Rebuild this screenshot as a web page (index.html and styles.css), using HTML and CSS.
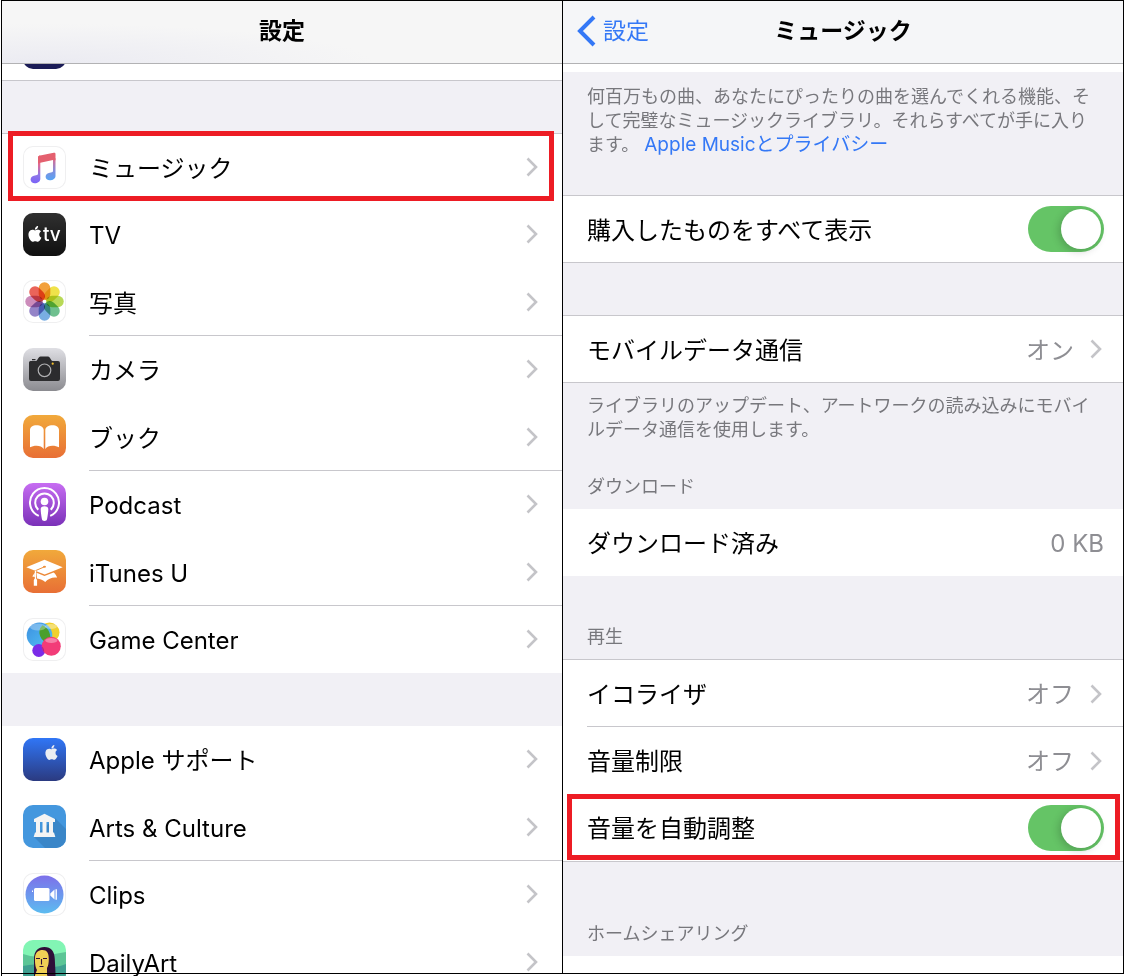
FILE: index.html
```html
<!DOCTYPE html>
<html lang="ja">
  <head>
    <meta charset="UTF-8" />
    <meta name="viewport" content="width=device-width, initial-scale=1.0" />
    <title>設定 - ミュージック</title>
    <link rel="stylesheet" href="styles.css">
  </head>
  <body>
    <svg class="defs" width="0" height="0" aria-hidden="true">
      <defs>
        <linearGradient id="g-music" x1="0" y1="0" x2="0" y2="1">
          <stop offset="0" stop-color="#f2565f" />
          <stop offset=".35" stop-color="#dc6b98" />
          <stop offset=".7" stop-color="#8f78e8" />
          <stop offset="1" stop-color="#7a62f8" />
        </linearGradient>
        <linearGradient id="g-music2" x1="0" y1="0" x2="0" y2="1">
          <stop offset="0" stop-color="#e2688a" />
          <stop offset=".6" stop-color="#7f90e0" />
          <stop offset="1" stop-color="#56a5f4" />
        </linearGradient>
        <linearGradient id="g-blue" x1="0" y1="0" x2="1" y2="1">
          <stop offset="0" stop-color="#3c8fe0" />
          <stop offset="1" stop-color="#53c3f5" />
        </linearGradient>
        <linearGradient id="g-clips" x1="0" y1="0" x2="0" y2="1">
          <stop offset="0" stop-color="#7d70ea" />
          <stop offset="1" stop-color="#5cbcf0" />
        </linearGradient>
        <path id="apple" d="M12.152 6.896c-.948 0-2.415-1.078-3.96-1.04-2.04.027-3.91 1.183-4.961 3.014-2.117 3.675-.546 9.103 1.519 12.09 1.013 1.454 2.208 3.09 3.792 3.039 1.52-.065 2.09-.987 3.935-.987 1.831 0 2.35.987 3.96.948 1.637-.026 2.676-1.48 3.676-2.948 1.156-1.688 1.636-3.325 1.662-3.415-.039-.013-3.182-1.221-3.22-4.857-.026-3.04 2.48-4.494 2.597-4.559-1.429-2.09-3.623-2.324-4.39-2.376-2-.156-3.675 1.09-4.61 1.09zM15.53 3.83c.843-1.012 1.4-2.427 1.245-3.83-1.207.052-2.662.805-3.532 1.818-.78.896-1.454 2.338-1.273 3.714 1.338.104 2.715-.688 3.559-1.701" />
        <rect id="petal" x="-5.8" y="-19.2" width="11.6" height="17.6" rx="5.8" />
        <symbol id="chevron" viewBox="0 0 12 20">
          <path d="M1.5 1.5 10 10 1.5 18.5" fill="none" stroke="#c4c4c8" stroke-width="2.6" />
        </symbol>
      </defs>
    </svg>

    <div class="screens">
      <main class="phone">
        <header class="navbar navbar-tint">
          <h1>設定</h1>
        </header>

        <div class="peek"><span class="icon icon-navy"></span></div>
        <div class="gap gap-lined"></div>

        <ul class="list list-lined">
          <li class="row marked">
            <a href="#">
              <svg class="icon icon-white" viewBox="0 0 43 43">
                <path fill="url(#g-music)" d="M15 11.8c0-1.4.6-2 2-2.300L17.300 9.500V33c0 2.400-2.600 4.300-5.500 4.300-2.400 0-4.200-1.500-4.200-3.700 0-2.700 2.300-4 5.400-4.300 1.500-.2 2-.5 2-1.800z" />
                <path fill="url(#g-music2)" d="M30 14v10.700c0 1.200-.6 1.600-2.100 1.800-3 .3-5.300 1.600-5.300 4.200 0 2.200 1.800 3.600 4.200 3.600 3 0 5.700-2 5.700-4.400V12z" />
                <path fill="#e4606f" d="M15 12c0-1.500.7-2.200 2.200-2.500l13.500-2.700c1.200-.2 1.800.2 1.800 1.400v6L30 14l-12.700 2.800L15 17.500z" />
              </svg>
              <span class="label">ミュージック</span>
              <svg class="chevron"><use href="#chevron" /></svg>
            </a>
          </li>
          <li class="row">
            <a href="#">
              <svg class="icon icon-tv" viewBox="0 0 43 43">
                <use href="#apple" fill="#fff" transform="translate(4 13) scale(.66)" />
                <text x="20" y="28" class="tv-text">tv</text>
              </svg>
              <span class="label">TV</span>
              <svg class="chevron"><use href="#chevron" /></svg>
            </a>
          </li>
          <li class="row ruled">
            <a href="#">
              <svg class="icon icon-white" viewBox="0 0 43 43">
                <g class="petals" transform="translate(21.500 21.500)">
                  <use href="#petal" fill="#f2a03c" />
                  <use href="#petal" fill="#f0e24a" transform="rotate(45)" />
                  <use href="#petal" fill="#b8d957" transform="rotate(90)" />
                  <use href="#petal" fill="#6fc08f" transform="rotate(135)" />
                  <use href="#petal" fill="#79aee2" transform="rotate(180)" />
                  <use href="#petal" fill="#9484c8" transform="rotate(225)" />
                  <use href="#petal" fill="#cc8cbb" transform="rotate(270)" />
                  <use href="#petal" fill="#ea6459" transform="rotate(315)" />
                </g>
                <circle cx="21.500" cy="21.500" r="1.400" fill="#fff" />
              </svg>
              <span class="label">写真</span>
              <svg class="chevron"><use href="#chevron" /></svg>
            </a>
          </li>
          <li class="row">
            <a href="#">
              <svg class="icon icon-camera" viewBox="0 0 43 43">
                <path fill="#2c2c2e" d="M7.500 13H13c1.600 0 2.200-4.500 4.500-4.500h7.500c2.300 0 2.900 4.500 4.500 4.500h5.500a2 2 0 0 1 2 2v16a2 2 0 0 1-2 2H8a2 2 0 0 1-2-2V14.500A1.500 1.500 0 0 1 7.500 13zM9 11h3.500v1.200H9z" />
                <circle cx="21.500" cy="22.300" r="6.300" fill="none" stroke="#b0b0b2" stroke-width="1.200" />
                <circle cx="29.700" cy="15.700" r="1.100" fill="#f5c02c" />
              </svg>
              <span class="label">カメラ</span>
              <svg class="chevron"><use href="#chevron" /></svg>
            </a>
          </li>
          <li class="row ruled">
            <a href="#">
              <svg class="icon icon-orange" viewBox="0 0 43 43">
                <path fill="#fff" d="M7 15c0-2.800 2.700-4.800 6.500-4.800S20.700 12 20.700 15v19c-1.500-2.300-4-3.300-7-3.300-2.700 0-5 .5-6.700 1.600zM36 15c0-2.800-2.700-4.800-6.500-4.800S22.300 12 22.300 15v19c1.500-2.300 4-3.300 7-3.300 2.700 0 5 .5 6.700 1.600z" />
              </svg>
              <span class="label">ブック</span>
              <svg class="chevron"><use href="#chevron" /></svg>
            </a>
          </li>
          <li class="row">
            <a href="#">
              <svg class="icon icon-purple" viewBox="0 0 43 43">
                <g fill="none" stroke="#fff" stroke-width="2">
                  <path d="M15.800 32.900A14.500 14.500 0 1 1 27.200 32.900" />
                  <path d="M15.300 26.700A9.300 9.300 0 1 1 27.700 26.700" />
                </g>
                <circle cx="21.500" cy="18.500" r="3.800" fill="#fff" />
                <path fill="#fff" d="M17.700 26c0-2 1.500-2.800 3.800-2.800s3.800.8 3.800 2.800c0 3-.7 7-1.100 9.500-.3 1.800-1.200 2.500-2.700 2.500s-2.400-.7-2.700-2.500c-.4-2.500-1.100-6.500-1.100-9.500z" />
              </svg>
              <span class="label">Podcast</span>
              <svg class="chevron"><use href="#chevron" /></svg>
            </a>
          </li>
          <li class="row ruled">
            <a href="#">
              <svg class="icon icon-orange" viewBox="0 0 43 43">
                <path fill="#fff" d="M3.300 17.300 21.500 9.700l18.200 7.600-18 7.200z" />
                <path fill="none" stroke="#ee8f38" stroke-width="1" d="M21.500 16.800 10.500 21.500" />
                <ellipse cx="21.500" cy="16.800" rx="1.500" ry="1" fill="#ee8f38" />
                <path fill="#fff" d="M13.500 22.800l8 3.300 9-3.700c1.500 1 2.700 2.600 3.700 5.200-4.500-.8-8.700.8-12 4.400-2-1.800-4.600-3-8.200-3.500z" />
                <path fill="#fff" d="M11.800 20.500h1.300v8l1 1.500v5.700h-3.300V30l1-1.500z" />
                <path fill="#fff" d="M9.300 26.500l2.500-4v4.500z" />
              </svg>
              <span class="label">iTunes U</span>
              <svg class="chevron"><use href="#chevron" /></svg>
            </a>
          </li>
          <li class="row">
            <a href="#">
              <svg class="icon icon-white" viewBox="0 0 43 43">
                <circle cx="26.500" cy="14.500" r="10" fill="#f0d02e" />
                <circle cx="16.500" cy="17.300" r="12.800" fill="url(#g-blue)" />
                <path fill="#4a9f2c" d="M19.500 7.300A10 10 0 0 0 26 24.500 12.800 12.800 0 0 0 19.500 7.300z" />
                <circle cx="15.800" cy="32.500" r="6.500" fill="#7b2be8" />
                <circle cx="28.300" cy="28.300" r="9.500" fill="#f23c78" />
                <path fill="#a8238f" d="M19 28.400a9.500 9.500 0 0 0 2 6 6.500 6.500 0 0 0-2-6z" />
                <ellipse cx="15" cy="9" rx="8" ry="3.500" fill="#fff" opacity=".3" />
                <ellipse cx="28" cy="8.500" rx="6" ry="2.500" fill="#fff" opacity=".35" />
                <ellipse cx="28.300" cy="22.500" rx="6" ry="2.500" fill="#fff" opacity=".35" />
              </svg>
              <span class="label">Game Center</span>
              <svg class="chevron"><use href="#chevron" /></svg>
            </a>
          </li>
        </ul>

        <div class="gap"></div>

        <ul class="list">
          <li class="row">
            <a href="#">
              <svg class="icon icon-support" viewBox="0 0 43 43">
                <use href="#apple" fill="#eceef2" transform="translate(21 7) scale(.62)" />
              </svg>
              <span class="label">Apple サポート</span>
              <svg class="chevron"><use href="#chevron" /></svg>
            </a>
          </li>
          <li class="row ruled">
            <a href="#">
              <svg class="icon icon-arts" viewBox="0 0 43 43">
                <path fill="#3a86c8" d="M32 13 43 24v19H22L11 32z" />
                <path fill="#f4f4f4" d="M21.500 8.800 32 14v3H11v-3zM13 17h4v11h-4zM19.500 17h4v11h-4zM26 17h4v11h-4zM12 27.500h19l1.300 4.500H10.700z" />
              </svg>
              <span class="label">Arts &amp; Culture</span>
              <svg class="chevron"><use href="#chevron" /></svg>
            </a>
          </li>
          <li class="row">
            <a href="#">
              <svg class="icon icon-white" viewBox="0 0 43 43">
                <circle cx="21.500" cy="21.500" r="19" fill="url(#g-clips)" />
                <rect x="11" y="15" width="15.500" height="13" rx="1.500" fill="#fff" />
                <path fill="#fff" d="M27.300 20.500 31.500 16.500v10l-4.200-4zM32.500 16.300h1.400v10.400h-1.400zM9 17.500h1v1.500H9z" />
              </svg>
              <span class="label">Clips</span>
              <svg class="chevron"><use href="#chevron" /></svg>
            </a>
          </li>
          <li class="row ruled">
            <a href="#">
              <svg class="icon icon-daily" viewBox="0 0 43 43">
                <path fill="#5cc596" d="M0 14q11 4 21 2t22-4v31H0z" />
                <path fill="#3f9f90" d="M0 26q12-3 22 0t21-2v19H0z" />
                <path fill="#2e0f38" d="M11 43V19c0-8 4-12 10.500-12S31.500 11 31.800 19c.3 7 1 14 .7 24z" />
                <path fill="#efcf55" d="M12 17c.5-4.500 3.500-7 7.500-7 4.500 0 6.300 3 6.300 9 0 4-.5 7-1.800 9v7l5 8H12v-8l2-5C12.500 28 11.700 23 12 17z" />
                <path fill="none" stroke="#2e0f38" stroke-width="1.100" d="M13 18.500h4M20 18.500h4M18.500 19v5.500M16.500 26.500h4" />
              </svg>
              <span class="label">DailyArt</span>
              <svg class="chevron"><use href="#chevron" /></svg>
            </a>
          </li>
        </ul>
      </main>

      <section class="phone phone-right">
        <header class="navbar">
          <a class="back" href="#">
            <svg viewBox="0 0 20 32"><path d="M18 2 4 16l14 14" fill="none" stroke="#3478f6" stroke-width="4" /></svg>
            設定
          </a>
          <h2>ミュージック</h2>
        </header>

        <div class="sliver"></div>
        <div class="notes notes-top">
          <p>何百万もの曲、あなたにぴったりの曲を選んでくれる機能、そして完璧なミュージックライブラリ。それらすべてが手に入ります。 <a href="#">Apple Musicとプライバシー</a></p>
        </div>

        <div class="group group-lined">
          <div class="setting">
            <label for="show-all">購入したものをすべて表示</label>
            <input class="switch" id="show-all" type="checkbox" checked />
          </div>
        </div>

        <div class="gap"></div>

        <div class="group group-lined">
          <a class="setting" href="#">
            <span>モバイルデータ通信</span>
            <span class="value">オン</span>
            <svg class="chevron"><use href="#chevron" /></svg>
          </a>
        </div>
        <div class="notes">
          <p>ライブラリのアップデート、アートワークの読み込みにモバイルデータ通信を使用します。</p>
          <h3>ダウンロード</h3>
        </div>

        <div class="group">
          <div class="setting">
            <span>ダウンロード済み</span>
            <span class="value">0 KB</span>
          </div>
        </div>
        <div class="notes notes-play">
          <h3>再生</h3>
        </div>

        <div class="group group-lined">
          <a class="setting ruled" href="#">
            <span>イコライザ</span>
            <span class="value">オフ</span>
            <svg class="chevron"><use href="#chevron" /></svg>
          </a>
          <a class="setting" href="#">
            <span>音量制限</span>
            <span class="value">オフ</span>
            <svg class="chevron"><use href="#chevron" /></svg>
          </a>
          <div class="setting marked">
            <label for="sound-check">音量を自動調整</label>
            <input class="switch" id="sound-check" type="checkbox" checked />
          </div>
        </div>
        <div class="notes notes-home">
          <h3>ホームシェアリング</h3>
        </div>
      </section>
    </div>
  </body>
</html>
```

FILE: styles.css
```css
* {
  box-sizing: border-box;
}
body {
  margin: 0;
  font-family: Inter, "Noto Sans CJK JP", sans-serif;
  font-size: 24px;
  line-height: 32px;
  color: #000;
  background: #fff;
}
a {
  color: inherit;
  text-decoration: none;
}
h1,
h2,
h3,
p,
ul {
  margin: 0;
  padding: 0;
  list-style: none;
}
.defs {
  position: absolute;
}

.screens {
  display: flex;
  position: relative;
  height: 100vh;
  padding-left: 1px;
  overflow: hidden;
}
/* bottom edge of the frame, drawn over the cut-off row */
.screens::after {
  content: "";
  position: absolute;
  left: 1px;
  right: 0;
  bottom: 2px;
  height: 1px;
  background: #000;
}
.phone {
  box-sizing: content-box;
  flex: 1;
  min-width: 0;
  border-top: 1px solid #000;
  border-left: 1px solid #000;
}
.phone-right {
  border-right: 1px solid #000;
  margin-bottom: 2px;
}

/* nav bars */
.navbar {
  display: grid;
  grid-template-columns: 1fr auto 1fr;
  align-items: center;
  height: 63px;
  padding: 0 13px 2px;
  border-bottom: 1px solid #b2b2b4;
  background: #f5f6f8;
}
.navbar-tint {
  background: radial-gradient(ellipse at 8% 100%, #ebebf2, #f6f6f6 45%);
}
.navbar h1,
.navbar h2 {
  grid-column: 2;
  font-size: 23px;
  font-weight: 700;
}
.back {
  display: flex;
  align-items: center;
  gap: 7px;
  font-size: 23px;
  color: #3478f6;
}
.back svg {
  width: 20px;
  height: 32px;
}

/* left: app list */
.peek {
  display: flex;
  align-items: flex-end;
  height: 16px;
  padding: 0 21px 11px;
  overflow: hidden;
}
.icon-navy {
  background: #1b1c57;
}
.gap {
  height: 53px;
  background: #f1f0f5;
}
.gap-lined {
  border-top: 1px solid #c8c7cc;
}
.list-lined {
  border-top: 1px solid #c8c7cc;
}
.row a {
  display: flex;
  align-items: center;
  height: 67px;
  padding: 0 24px 1px 21px;
}
.row .label {
  flex: 1;
  margin-left: 23px;
  padding-top: 4px;
}
.row.ruled {
  background: linear-gradient(#c8c7cc, #c8c7cc) 87px 100% / 100% 1px no-repeat;
}
.row.ruled a {
  height: 68px;
}
.icon {
  flex: none;
  width: 43px;
  height: 43px;
  border-radius: 10px;
}
.icon-white {
  background: #fff;
  box-shadow: inset 0 0 0 1px #efeff0;
}
.icon-tv {
  background: linear-gradient(#303030, #101010);
}
.tv-text {
  font: 500 19px Inter, sans-serif;
  fill: #fff;
}
.icon-camera {
  background: linear-gradient(#dfdfe4, #8b8b90);
}
.icon-orange {
  background: linear-gradient(#f1a93b, #e86f35);
}
.icon-purple {
  background: linear-gradient(#c76df2, #7a31b8);
}
.icon-support {
  background: linear-gradient(#3076f6, #2b3a80);
}
.icon-arts {
  background: #4497de;
}
.icon-daily {
  background: #82f5b4;
}
.petals use {
  mix-blend-mode: multiply;
}
.chevron {
  flex: none;
  width: 12px;
  height: 20px;
}

/* right: music settings */
.phone-right .gap {
  height: 52px;
}
.sliver {
  height: 8px;
}
.notes {
  padding: 11px 24px 10px;
  background: #f1f0f5;
  color: #77777c;
  font-size: 18px;
  line-height: 24px;
}
.notes a {
  font-size: 19px;
  color: #3478f6;
}
.notes h3 {
  font-size: 18px;
  font-weight: 400;
}
.notes p + h3 {
  margin-top: 33px;
}
.notes-top {
  padding: 13px 24px 38px;
}
.notes-play {
  padding-top: 49px;
}
.notes-home {
  padding-top: 60px;
}
.group-lined {
  border-top: 1px solid #c8c7cc;
  border-bottom: 1px solid #c8c7cc;
}
.setting {
  display: flex;
  align-items: center;
  height: 67px;
  padding: 0 19px 0 24px;
}
.group-lined .setting:only-child {
  height: 66px;
}
.setting > :first-child {
  flex: 1;
  padding-top: 3px;
}
.setting.ruled {
  background: linear-gradient(#c8c7cc, #c8c7cc) 24px 100% / 100% 1px no-repeat;
}
.value {
  padding-top: 3px;
  color: #8e8e93;
}
.value + .chevron {
  margin: 0 2px 0 16px;
}
.switch {
  appearance: none;
  display: flex;
  justify-content: flex-end;
  width: 76px;
  height: 46px;
  margin: 0;
  padding: 3px;
  border-radius: 23px;
  background: #65c466;
}
.switch::before {
  content: "";
  width: 40px;
  height: 40px;
  border-radius: 50%;
  background: #fff;
  box-shadow: -2px 2px 8px rgba(0, 0, 0, 0.2);
}
.switch:not(:checked) {
  justify-content: flex-start;
  background: #e9e9ea;
}

/* red marker boxes */
.marked {
  position: relative;
}
.marked::after {
  content: "";
  position: absolute;
  inset: -3px 8px 0 6px;
  border: 5px solid #ed1c24;
  pointer-events: none;
}
.setting.marked::after {
  inset: 0 3px 1px 4px;
}
```
